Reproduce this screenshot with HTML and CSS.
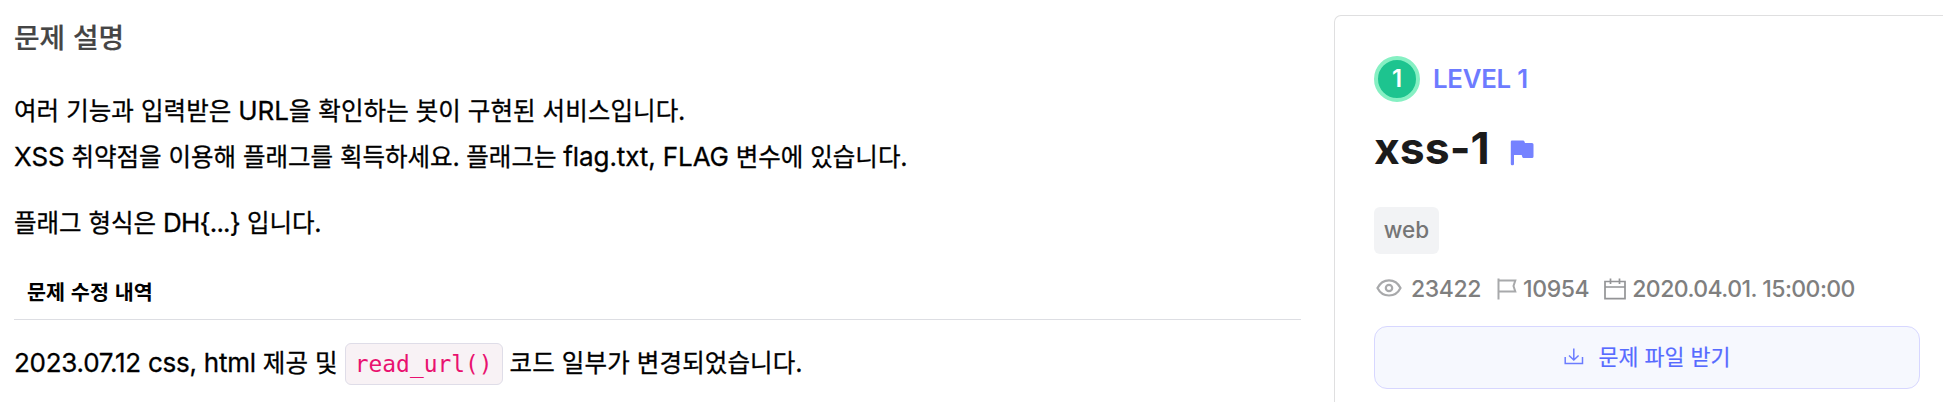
FILE: index.html
```html
<!DOCTYPE html>
<html lang="ko">
<head>
    <meta charset="UTF-8">
    <title>xss-1</title>
    <link rel="stylesheet" href="styles.css">
</head>
<body>
    <div class="page">
        <main class="description">
            <h2 class="section-title">문제 설명</h2>
            <p class="intro">
                <span class="line line-1">여러 기능과 입력받은 <span class="en">URL</span>을 확인하는 봇이 구현된 서비스입니다.</span>
                <span class="line line-2"><span class="en">XSS</span> 취약점을 이용해 플래그를 획득하세요. 플래그는 <span class="en">flag.txt, FLAG</span> 변수에 있습니다.</span>
            </p>
            <p class="format line">플래그 형식은 <span class="en">DH{...}</span> 입니다.</p>
            <h4 class="history-title">문제 수정 내역</h4>
            <p class="history line"><span class="en">2023.07.12 css, html</span> 제공 및 <code>read_url()</code> 코드 일부가 변경되었습니다.</p>
        </main>

        <aside class="card">
            <div class="level">
                <span class="badge">1</span>
                <span class="level-text">LEVEL 1</span>
            </div>
            <div class="title-row">
                <h1>xss-1</h1>
                <svg class="flag" width="24" height="26" viewBox="0 0 24 26">
                    <path d="M2 .5H13.2Q14 .5 14.3 1.3L15 3H22Q23.500 3 23.500 4.500V16.500Q23.500 18 22 18H13.500Q12.700 18 12.400 17.200L11.700 15H4V24Q4 25.200 2.700 25.200H2Q.8 25.200 .8 24V1.700Q.8 .5 2 .5Z" fill="#7582ff"/>
                </svg>
            </div>
            <span class="tag">web</span>
            <div class="stats">
                <svg class="eye" width="26" height="18" viewBox="0 0 26 18" fill="none" stroke="#a8a9ab" stroke-width="2.200">
                    <path d="M1.500 9C4 4 8 1.300 13 1.300S22 4 24.500 9C22 14 18 16.500 13 16.500S4 14 1.500 9Z"/>
                    <circle cx="13" cy="9" r="3.200"/>
                </svg>
                <span class="views">23422</span>
                <svg class="flag-line" width="20" height="22" viewBox="0 0 20 22" fill="none" stroke="#a8a9ab" stroke-width="2">
                    <path d="M1.500 .5V21.500M1.500 2.500H18.300L16.500 8L18.300 13.500H1.500"/>
                </svg>
                <span class="solves">10954</span>
                <svg class="calendar" width="22" height="22" viewBox="0 0 22 22" fill="none" stroke="#939496" stroke-width="1.700">
                    <path d="M1 3.500H21V20.700H1ZM1 9H21M6.500 .5V6M15.500 .5V6"/>
                </svg>
                <span class="date">2020.04.01. 15:00:00</span>
            </div>
            <button class="download" type="button">
                <svg width="20" height="18" viewBox="0 0 20 18" fill="none" stroke="#6b7cff" stroke-width="1.500">
                    <path d="M1.200 9V15.500H18.500V9M9.800 .5V12M5 7.500L9.800 12L14.600 7.500"/>
                </svg>
                <span class="download-text">문제 파일 받기</span>
            </button>
        </aside>
    </div>
</body>
</html>
```

FILE: styles.css
```css
* {
    box-sizing: border-box;
}
body {
    margin: 0;
    height: 402px;
    overflow: hidden;
    background: #fff;
    color: #000;
    font-family: "Noto Sans CJK KR", sans-serif;
}
h1, h2, h4, p {
    margin: 0;
}
.page {
    display: flex;
    align-items: flex-start;
    height: 402px;
    overflow: hidden;
}
.description {
    flex: none;
    width: 1287px;
    margin-left: 14px;
}
.section-title {
    margin-top: 13px;
    font-size: 27.800px;
    line-height: 46px;
    font-weight: 500;
    color: #454545;
    -webkit-text-stroke: 0.2px #454545;
}
.line {
    display: block;
    font-size: 24.500px;
    line-height: 46px;
    height: 46px;
    white-space: nowrap;
    -webkit-text-stroke: 0.3px #000;
}
.line-1 {
    letter-spacing: 0.07px;
}
.en {
    font-family: Inter, sans-serif;
    font-size: 26px;
    letter-spacing: -0.1px;
}
.intro {
    margin-top: 28px;
}
.format {
    margin-top: 20px;
}
.format .en {
    letter-spacing: -0.8px;
}
.history-title {
    margin-top: 21px;
    padding-left: 13px;
    height: 54px;
    border-bottom: 1px solid #dddee3;
    font-size: 20.700px;
    line-height: 50px;
    font-weight: 700;
}
.history {
    margin-top: 19px;
    letter-spacing: 0.12px;
}
.history .en {
    letter-spacing: -0.25px;
}
code {
    display: inline-block;
    height: 42px;
    padding: 0 9px;
    border: 1px solid #dfdde8;
    border-radius: 6px;
    background: #f8f2f5;
    color: #e9116f;
    font-family: "DejaVu Sans Mono", monospace;
    font-size: 22.900px;
    line-height: 40px;
    letter-spacing: 0;
    -webkit-text-stroke: 0;
}
.card {
    flex: none;
    width: 640px;
    height: 387px;
    margin: 15px 0 0 33px;
    padding: 40px 0 0 39px;
    border: 1px solid #dfdfe0;
    border-bottom: 0;
    border-radius: 7px 7px 0 0;
    font-family: Inter, "Noto Sans CJK KR", sans-serif;
}
.level {
    display: flex;
    align-items: center;
    gap: 13px;
    height: 46px;
}
.badge {
    width: 46px;
    height: 46px;
    border: 4px solid #86f0c3;
    border-radius: 50%;
    background: #1dc48f;
    color: #fff;
    text-align: center;
    font-size: 24px;
    line-height: 37px;
    font-weight: 600;
}
.level-text {
    margin-top: -1px;
    color: #6d7bff;
    font-size: 25.800px;
    font-weight: 600;
    letter-spacing: -0.25px;
}
.title-row {
    display: flex;
    gap: 20px;
    margin-top: 19px;
    height: 60px;
}
h1 {
    color: #1b1b1b;
    font-size: 44.500px;
    line-height: 54px;
    font-weight: 700;
}
.flag {
    margin-top: 19px;
}
.tag {
    display: block;
    width: 65px;
    height: 47px;
    margin-top: 26px;
    border-radius: 6px;
    background: #f2f3f5;
    color: #757575;
    font-size: 22.500px;
    line-height: 46px;
    font-weight: 500;
    text-align: center;
}
.stats {
    display: flex;
    align-items: center;
    height: 28px;
    margin-top: 21px;
    padding-left: 2px;
    color: #7f7f7f;
    font-size: 23px;
    line-height: 28px;
    font-weight: 500;
    letter-spacing: -0.4px;
}
.eye {
    margin: -2px 9px 0 0;
}
.flag-line {
    margin: 0 6px 0 16px;
}
.calendar {
    margin: 0 6px 0 15px;
}
.date {
    letter-spacing: -0.55px;
}
.download {
    display: flex;
    align-items: center;
    justify-content: center;
    gap: 15px;
    width: 546px;
    height: 63px;
    margin-top: 23px;
    border: 1px solid #d7d7ff;
    border-radius: 13px;
    background: #f6f8fe;
    color: #566bff;
    font-family: "Noto Sans CJK KR", sans-serif;
    font-size: 21.700px;
    -webkit-text-stroke: 0.2px #566bff;
}
.download-text {
    margin-top: -5px;
}
.download svg {
    margin-top: -1px;
}
```
